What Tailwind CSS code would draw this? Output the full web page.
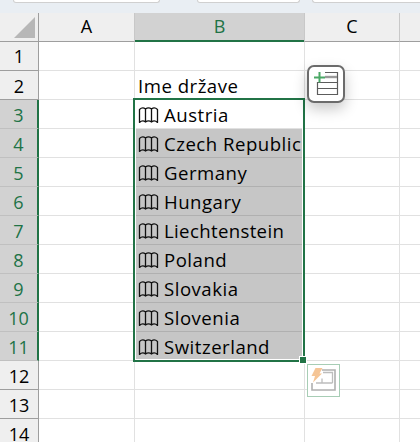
<!DOCTYPE html>
<html lang="en">
<head>
  <meta charset="UTF-8">
  <title>Ime države</title>
  <script src="https://cdn.jsdelivr.net/npm/@tailwindcss/browser@4"></script>
</head>
<body class="bg-white overflow-hidden font-['Open_Sans',sans-serif] text-[18px] text-black">
<svg class="hidden">
  <symbol id="map" viewBox="0 0 21 18">
    <path d="M1.5 3.4 C3.5 1.6 5.5 1.4 7.5 3 C9.5 1.4 11.5 1.4 13.5 3 C15.5 1.4 17.5 1.6 19.5 3.4 V16.4 C17.5 14.6 15.5 14.4 13.5 16 C11.5 14.4 9.5 14.4 7.5 16 C5.5 14.4 3.5 14.6 1.5 16.4 Z M7.5 3 V16 M13.5 3 V16" fill="none" stroke="#111" stroke-width="1.3" stroke-linejoin="round"/>
  </symbol>
</svg>
<div class="relative w-[420px] h-[442px] overflow-hidden">
  <!-- ribbon strip -->
  <div class="h-[13px] bg-[#e9eef3] flex pl-[13px]">
    <div class="w-[147px] h-[3px] bg-white rounded-b-md border-b border-x border-[#d0d0d0]"></div>
    <div class="w-[103px] ml-[37px] h-[3px] bg-white rounded-b-md border-b border-x border-[#d0d0d0]"></div>
    <div class="flex-1 ml-[12px] h-[3px] bg-white rounded-bl-md border-b border-l border-[#d0d0d0]"></div>
  </div>

  <!-- column headers -->
  <div class="flex h-[29px] bg-[#efefef] text-[18px] leading-[27px] text-center">
    <div class="w-[39px] border-r border-b border-[#9e9e9e] flex items-end justify-end pr-[3px] pb-[3px]">
      <div class="w-[21px] h-[21px] bg-[#b7b7b7] [clip-path:polygon(100%_0,100%_100%,0_100%)]"></div>
    </div>
    <div class="w-[96px] border-r border-b border-[#c8c8c8] border-b-[#9e9e9e]">A</div>
    <div class="w-[169px] bg-[#d2d2d2] border-b-2 border-[#217346] text-[#217346]">B</div>
    <div class="w-[96px] border-x border-b border-[#c8c8c8] border-b-[#9e9e9e]">C</div>
    <div class="flex-1 border-b border-[#9e9e9e]"></div>
  </div>

  <!-- rows -->
  <div class="flex h-[29px] leading-[28px]"><div class="w-[39px] bg-[#efefef] border-r border-b border-[#9e9e9e] text-center">1</div><div class="w-[96px] border-r border-b border-[#e1e1e1]"></div><div class="w-[170px] border-r border-b border-[#e1e1e1]"></div><div class="w-[95px] border-r border-b border-[#e1e1e1]"></div><div class="flex-1 border-b border-[#e1e1e1]"></div></div>
  <div class="flex h-[29px] leading-[30px]"><div class="w-[39px] bg-[#efefef] border-r border-b border-[#9e9e9e] text-center">2</div><div class="w-[96px] border-r border-b border-[#e1e1e1]"></div><div class="w-[170px] border-r border-b border-[#e1e1e1] pl-[3px] text-[18.6px] tracking-[0.5px]">Ime države</div><div class="w-[95px] border-r border-b border-[#e1e1e1]"></div><div class="flex-1 border-b border-[#e1e1e1]"></div></div>

  <div class="flex h-[29px] leading-[30px]"><div class="w-[39px] bg-[#d2d2d2] border-r-2 border-b border-r-[#217346] border-b-[#c0c0c0] text-center text-[#217346]">3</div><div class="w-[96px] border-r border-b border-[#e1e1e1]"></div><div class="w-[170px] border-r border-b border-[#e1e1e1] pl-[3px] pt-[1px] flex items-center gap-[5px] text-[18.6px] tracking-[0.5px]"><svg class="w-[21px] h-[18px] shrink-0"><use href="#map"/></svg>Austria</div><div class="w-[95px] border-r border-b border-[#e1e1e1]"></div><div class="flex-1 border-b border-[#e1e1e1]"></div></div>
  <div class="flex h-[29px] leading-[30px]"><div class="w-[39px] bg-[#d2d2d2] border-r-2 border-b border-r-[#217346] border-b-[#c0c0c0] text-center text-[#217346]">4</div><div class="w-[96px] border-r border-b border-[#e1e1e1]"></div><div class="w-[170px] bg-[#c6c6c6] border-r border-b border-[#b0b0b0] pl-[3px] pt-[1px] flex items-center gap-[5px] whitespace-nowrap overflow-hidden text-[18.6px] tracking-[0.5px]"><svg class="w-[21px] h-[18px] shrink-0"><use href="#map"/></svg>Czech Republic</div><div class="w-[95px] border-r border-b border-[#e1e1e1]"></div><div class="flex-1 border-b border-[#e1e1e1]"></div></div>
  <div class="flex h-[29px] leading-[30px]"><div class="w-[39px] bg-[#d2d2d2] border-r-2 border-b border-r-[#217346] border-b-[#c0c0c0] text-center text-[#217346]">5</div><div class="w-[96px] border-r border-b border-[#e1e1e1]"></div><div class="w-[170px] bg-[#c6c6c6] border-r border-b border-[#b0b0b0] pl-[3px] pt-[1px] flex items-center gap-[5px] text-[18.6px] tracking-[0.5px]"><svg class="w-[21px] h-[18px] shrink-0"><use href="#map"/></svg>Germany</div><div class="w-[95px] border-r border-b border-[#e1e1e1]"></div><div class="flex-1 border-b border-[#e1e1e1]"></div></div>
  <div class="flex h-[29px] leading-[30px]"><div class="w-[39px] bg-[#d2d2d2] border-r-2 border-b border-r-[#217346] border-b-[#c0c0c0] text-center text-[#217346]">6</div><div class="w-[96px] border-r border-b border-[#e1e1e1]"></div><div class="w-[170px] bg-[#c6c6c6] border-r border-b border-[#b0b0b0] pl-[3px] pt-[1px] flex items-center gap-[5px] text-[18.6px] tracking-[0.5px]"><svg class="w-[21px] h-[18px] shrink-0"><use href="#map"/></svg>Hungary</div><div class="w-[95px] border-r border-b border-[#e1e1e1]"></div><div class="flex-1 border-b border-[#e1e1e1]"></div></div>
  <div class="flex h-[29px] leading-[30px]"><div class="w-[39px] bg-[#d2d2d2] border-r-2 border-b border-r-[#217346] border-b-[#c0c0c0] text-center text-[#217346]">7</div><div class="w-[96px] border-r border-b border-[#e1e1e1]"></div><div class="w-[170px] bg-[#c6c6c6] border-r border-b border-[#b0b0b0] pl-[3px] pt-[1px] flex items-center gap-[5px] text-[18.6px] tracking-[0.35px]"><svg class="w-[21px] h-[18px] shrink-0"><use href="#map"/></svg>Liechtenstein</div><div class="w-[95px] border-r border-b border-[#e1e1e1]"></div><div class="flex-1 border-b border-[#e1e1e1]"></div></div>
  <div class="flex h-[29px] leading-[30px]"><div class="w-[39px] bg-[#d2d2d2] border-r-2 border-b border-r-[#217346] border-b-[#c0c0c0] text-center text-[#217346]">8</div><div class="w-[96px] border-r border-b border-[#e1e1e1]"></div><div class="w-[170px] bg-[#c6c6c6] border-r border-b border-[#b0b0b0] pl-[3px] pt-[1px] flex items-center gap-[5px] text-[18.6px] tracking-[0.5px]"><svg class="w-[21px] h-[18px] shrink-0"><use href="#map"/></svg>Poland</div><div class="w-[95px] border-r border-b border-[#e1e1e1]"></div><div class="flex-1 border-b border-[#e1e1e1]"></div></div>
  <div class="flex h-[29px] leading-[30px]"><div class="w-[39px] bg-[#d2d2d2] border-r-2 border-b border-r-[#217346] border-b-[#c0c0c0] text-center text-[#217346]">9</div><div class="w-[96px] border-r border-b border-[#e1e1e1]"></div><div class="w-[170px] bg-[#c6c6c6] border-r border-b border-[#b0b0b0] pl-[3px] pt-[1px] flex items-center gap-[5px] text-[18.6px] tracking-[0.5px]"><svg class="w-[21px] h-[18px] shrink-0"><use href="#map"/></svg>Slovakia</div><div class="w-[95px] border-r border-b border-[#e1e1e1]"></div><div class="flex-1 border-b border-[#e1e1e1]"></div></div>
  <div class="flex h-[29px] leading-[30px]"><div class="w-[39px] bg-[#d2d2d2] border-r-2 border-b border-r-[#217346] border-b-[#c0c0c0] text-center text-[#217346]">10</div><div class="w-[96px] border-r border-b border-[#e1e1e1]"></div><div class="w-[170px] bg-[#c6c6c6] border-r border-b border-[#b0b0b0] pl-[3px] pt-[1px] flex items-center gap-[5px] text-[18.6px] tracking-[0.5px]"><svg class="w-[21px] h-[18px] shrink-0"><use href="#map"/></svg>Slovenia</div><div class="w-[95px] border-r border-b border-[#e1e1e1]"></div><div class="flex-1 border-b border-[#e1e1e1]"></div></div>
  <div class="flex h-[29px] leading-[30px]"><div class="w-[39px] bg-[#d2d2d2] border-r-2 border-b border-r-[#217346] border-b-[#c0c0c0] text-center text-[#217346]">11</div><div class="w-[96px] border-r border-b border-[#e1e1e1]"></div><div class="w-[170px] bg-[#c6c6c6] border-r border-b border-[#b0b0b0] pl-[3px] pt-[1px] flex items-center gap-[5px] text-[18.6px] tracking-[0.5px]"><svg class="w-[21px] h-[18px] shrink-0"><use href="#map"/></svg>Switzerland</div><div class="w-[95px] border-r border-b border-[#e1e1e1]"></div><div class="flex-1 border-b border-[#e1e1e1]"></div></div>

  <div class="flex h-[29px] leading-[30px]"><div class="w-[39px] bg-[#efefef] border-r border-b border-[#9e9e9e] text-center">12</div><div class="w-[96px] border-r border-b border-[#e1e1e1]"></div><div class="w-[170px] border-r border-b border-[#e1e1e1]"></div><div class="w-[95px] border-r border-b border-[#e1e1e1]"></div><div class="flex-1 border-b border-[#e1e1e1]"></div></div>
  <div class="flex h-[29px] leading-[30px]"><div class="w-[39px] bg-[#efefef] border-r border-b border-[#9e9e9e] text-center">13</div><div class="w-[96px] border-r border-b border-[#e1e1e1]"></div><div class="w-[170px] border-r border-b border-[#e1e1e1]"></div><div class="w-[95px] border-r border-b border-[#e1e1e1]"></div><div class="flex-1 border-b border-[#e1e1e1]"></div></div>
  <div class="flex h-[29px] leading-[30px]"><div class="w-[39px] bg-[#efefef] border-r border-b border-[#9e9e9e] text-center">14</div><div class="w-[96px] border-r border-b border-[#e1e1e1]"></div><div class="w-[170px] border-r border-b border-[#e1e1e1]"></div><div class="w-[95px] border-r border-b border-[#e1e1e1]"></div><div class="flex-1 border-b border-[#e1e1e1]"></div></div>

  <!-- selection -->
  <div class="absolute left-[133px] top-[98px] w-[172px] h-[264px] border-2 border-[#217346] outline outline-1 -outline-offset-3 outline-white"></div>
  <div class="absolute left-[299px] top-[356px] w-[6px] h-[6px] bg-[#217346] border border-white box-content"></div>

  <!-- quick analysis -->
  <div class="absolute left-[307px] top-[65px] w-[38px] h-[38px] rounded-[7px] bg-white border-2 border-[#6b6b6b] shadow-[0_6px_14px_rgba(0,0,0,0.22)]">
    <svg class="w-[34px] h-[34px]" viewBox="0 0 34 34">
      <path d="M16 5.5H28.5V27.5H8.5V15.5H28.5M8.5 21.5H28.5" fill="none" stroke="#5c5c5c" stroke-width="1.2"/>
      <path d="M16 10H28" fill="none" stroke="#9a9a9a" stroke-width="2.4"/>
      <path d="M10.5 5V15.5M5 10.5H16" stroke="#4ba866" stroke-width="2"/>
    </svg>
  </div>

  <!-- flash fill -->
  <div class="absolute left-[307px] top-[364px] w-[33px] h-[33px] border border-[#a7cdb5] bg-white">
    <svg class="w-[31px] h-[31px]" viewBox="0 0 31 31">
      <path d="M14 5H27V25H4V18" fill="none" stroke="#b0b0b0" stroke-width="1.6"/>
      <path d="M15 7.5H24.5V18M8 18H24.5M14 13.5V18" fill="none" stroke="#bdbdbd" stroke-width="1.3"/>
      <path d="M7.5 3H14.5L11.5 8.5H14L5 17.5L7 11H3.5Z" fill="#f5c596"/>
    </svg>
  </div>
</div>
</body>
</html>
